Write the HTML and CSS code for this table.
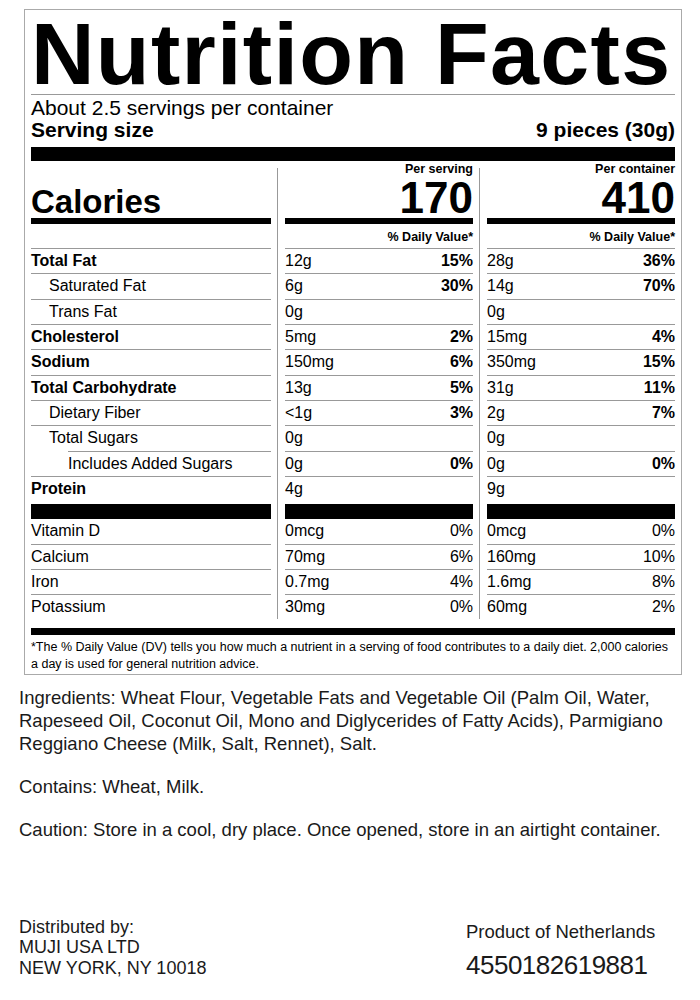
FILE: index.html
```html
<!DOCTYPE html>
<html lang="en">
<head>
<meta charset="utf-8">
<title>Nutrition Facts</title>
<link rel="stylesheet" href="styles.css">
</head>
<body>
<div class="page">
  <section class="label">
    <h1 class="title">Nutrition Facts</h1>
    <div class="servings">
      <div>About 2.5 servings per container</div>
      <div class="serving-size"><span>Serving size</span><span>9 pieces (30g)</span></div>
    </div>
    <div class="bar bar-thick"></div>
    <div class="table">
      <div class="col col-labels">
        <div class="head"><div class="cal-label">Calories</div></div>
        <div class="bar bar-med"></div>
        <div class="dv"></div>
        <div class="row b">Total Fat</div>
        <div class="row i1">Saturated Fat</div>
        <div class="row i1">Trans Fat</div>
        <div class="row b">Cholesterol</div>
        <div class="row b">Sodium</div>
        <div class="row b">Total Carbohydrate</div>
        <div class="row i1">Dietary Fiber</div>
        <div class="row i1 sub-line">Total Sugars</div>
        <div class="row i2">Includes Added Sugars</div>
        <div class="row b end">Protein</div>
        <div class="bar bar-sep"></div>
        <div class="row">Vitamin D</div>
        <div class="row">Calcium</div>
        <div class="row">Iron</div>
        <div class="row end">Potassium</div>
      </div>
      <div class="col col-vals">
        <div class="head"><div class="per">Per serving</div><div class="cal-num">170</div></div>
        <div class="bar bar-med"></div>
        <div class="dv">% Daily Value*</div>
        <div class="row"><span>12g</span><span class="pct">15%</span></div>
        <div class="row"><span>6g</span><span class="pct">30%</span></div>
        <div class="row"><span>0g</span></div>
        <div class="row"><span>5mg</span><span class="pct">2%</span></div>
        <div class="row"><span>150mg</span><span class="pct">6%</span></div>
        <div class="row"><span>13g</span><span class="pct">5%</span></div>
        <div class="row"><span>&lt;1g</span><span class="pct">3%</span></div>
        <div class="row"><span>0g</span></div>
        <div class="row"><span>0g</span><span class="pct">0%</span></div>
        <div class="row end"><span>4g</span></div>
        <div class="bar bar-sep"></div>
        <div class="row"><span>0mcg</span><span>0%</span></div>
        <div class="row"><span>70mg</span><span>6%</span></div>
        <div class="row"><span>0.7mg</span><span>4%</span></div>
        <div class="row end"><span>30mg</span><span>0%</span></div>
      </div>
      <div class="col col-vals col-last">
        <div class="head"><div class="per">Per container</div><div class="cal-num">410</div></div>
        <div class="bar bar-med"></div>
        <div class="dv">% Daily Value*</div>
        <div class="row"><span>28g</span><span class="pct">36%</span></div>
        <div class="row"><span>14g</span><span class="pct">70%</span></div>
        <div class="row"><span>0g</span></div>
        <div class="row"><span>15mg</span><span class="pct">4%</span></div>
        <div class="row"><span>350mg</span><span class="pct">15%</span></div>
        <div class="row"><span>31g</span><span class="pct">11%</span></div>
        <div class="row"><span>2g</span><span class="pct">7%</span></div>
        <div class="row"><span>0g</span></div>
        <div class="row"><span>0g</span><span class="pct">0%</span></div>
        <div class="row end"><span>9g</span></div>
        <div class="bar bar-sep"></div>
        <div class="row"><span>0mcg</span><span>0%</span></div>
        <div class="row"><span>160mg</span><span>10%</span></div>
        <div class="row"><span>1.6mg</span><span>8%</span></div>
        <div class="row end"><span>60mg</span><span>2%</span></div>
      </div>
    </div>
    <div class="bar bar-foot"></div>
    <p class="footnote">*The % Daily Value (DV) tells you how much a nutrient in a serving of food contributes to a daily diet. 2,000 calories a day is used for general nutrition advice.</p>
  </section>

  <div class="info">
    <p>Ingredients: Wheat Flour, Vegetable Fats and Vegetable Oil (Palm Oil, Water, Rapeseed Oil, Coconut Oil, Mono and Diglycerides of Fatty Acids), Parmigiano Reggiano Cheese (Milk, Salt, Rennet), Salt.</p>
    <p>Contains: Wheat, Milk.</p>
    <p>Caution: Store in a cool, dry place. Once opened, store in an airtight container.</p>
  </div>

  <footer class="footer">
    <div class="dist">Distributed by:<br>MUJI USA LTD<br>NEW YORK, NY 10018</div>
    <div class="origin">
      <div class="product">Product of Netherlands</div>
      <div class="code">4550182619881</div>
    </div>
  </footer>
</div>
</body>
</html>
```
FILE: styles.css
```css
html, body {
  margin: 0;
  background: #fff;
}

body {
  font-family: "Liberation Sans", Arial, sans-serif;
  color: #000;
}

.page {
  padding: 9px 18px 0 19px;
}

.label {
  margin-left: 5px;
  border: 1px solid #aaa;
  padding: 4px 6px 0;
}

.title {
  margin: 0;
  font-size: 88px;
  line-height: 80px;
  font-weight: 700;
  letter-spacing: 1.3px;
  white-space: nowrap;
  border-bottom: 1px solid #999;
}

.servings {
  margin-top: 2px;
  font-size: 21px;
  line-height: 22px;
}

.serving-size {
  display: flex;
  justify-content: space-between;
  font-weight: 700;
}

.bar {
  background: #000;
}

.bar-thick {
  height: 14px;
  margin-top: 6px;
}

.table {
  display: grid;
  grid-template-columns: 246px 202px 196px;
  margin-top: 1px;
}

.col-labels {
  padding-right: 6px;
}

.col-vals {
  padding: 0 6px 0 8px;
  background: linear-gradient(#999, #999) no-repeat 0 6px / 1px calc(100% - 8px);
}

.col-last {
  padding-right: 0;
}

.head {
  height: 56px;
}

.col-labels .head {
  display: flex;
  align-items: flex-end;
}

.cal-label {
  font-size: 33px;
  line-height: 33px;
  font-weight: 700;
}

.per {
  font-size: 12.5px;
  line-height: 15px;
  font-weight: 700;
  text-align: right;
}

.cal-num {
  font-size: 44px;
  line-height: 41px;
  font-weight: 700;
  text-align: right;
}

.bar-med {
  height: 6px;
}

.dv {
  height: 25px;
  box-sizing: border-box;
  padding-top: 3px;
  font-size: 12.5px;
  line-height: 21px;
  font-weight: 700;
  text-align: right;
  border-bottom: 1px solid #999;
}

.row {
  height: 25.33px;
  box-sizing: border-box;
  border-bottom: 1px solid #999;
  font-size: 16px;
  line-height: 24.33px;
  display: flex;
  justify-content: space-between;
  white-space: nowrap;
}

.row.b {
  font-weight: 700;
}

.row.end {
  border-bottom-color: transparent;
}

.i1 {
  padding-left: 18px;
}

.i2 {
  padding-left: 37px;
}

.row.sub-line {
  border-bottom-color: transparent;
  background: linear-gradient(#999, #999) no-repeat right bottom / calc(100% - 37px) 1px;
  background-origin: border-box;
}

.pct {
  font-weight: 700;
}

.bar-sep {
  height: 15px;
  margin-top: 2px;
}

.bar-foot {
  height: 7px;
  margin-top: 7px;
}

.footnote {
  margin: 4px 0 0;
  padding-bottom: 1px;
  font-size: 12.5px;
  line-height: 17px;
}

.info {
  margin-top: 11px;
  font-size: 18.5px;
  line-height: 23px;
  color: #1a1a1a;
}

.info p {
  margin: 0 0 20px;
}

.info p:last-child {
  margin-bottom: 0;
}

.footer {
  margin-top: 76px;
  display: grid;
  grid-template-columns: 447px 1fr;
  color: #1a1a1a;
}

.dist {
  font-size: 18px;
  line-height: 20.5px;
}

.origin {
  padding-top: 3px;
}

.product {
  font-size: 18.5px;
  line-height: 24px;
  margin-bottom: 6px;
}

.code {
  font-size: 26px;
  line-height: 30px;
  letter-spacing: -0.5px;
}
```
